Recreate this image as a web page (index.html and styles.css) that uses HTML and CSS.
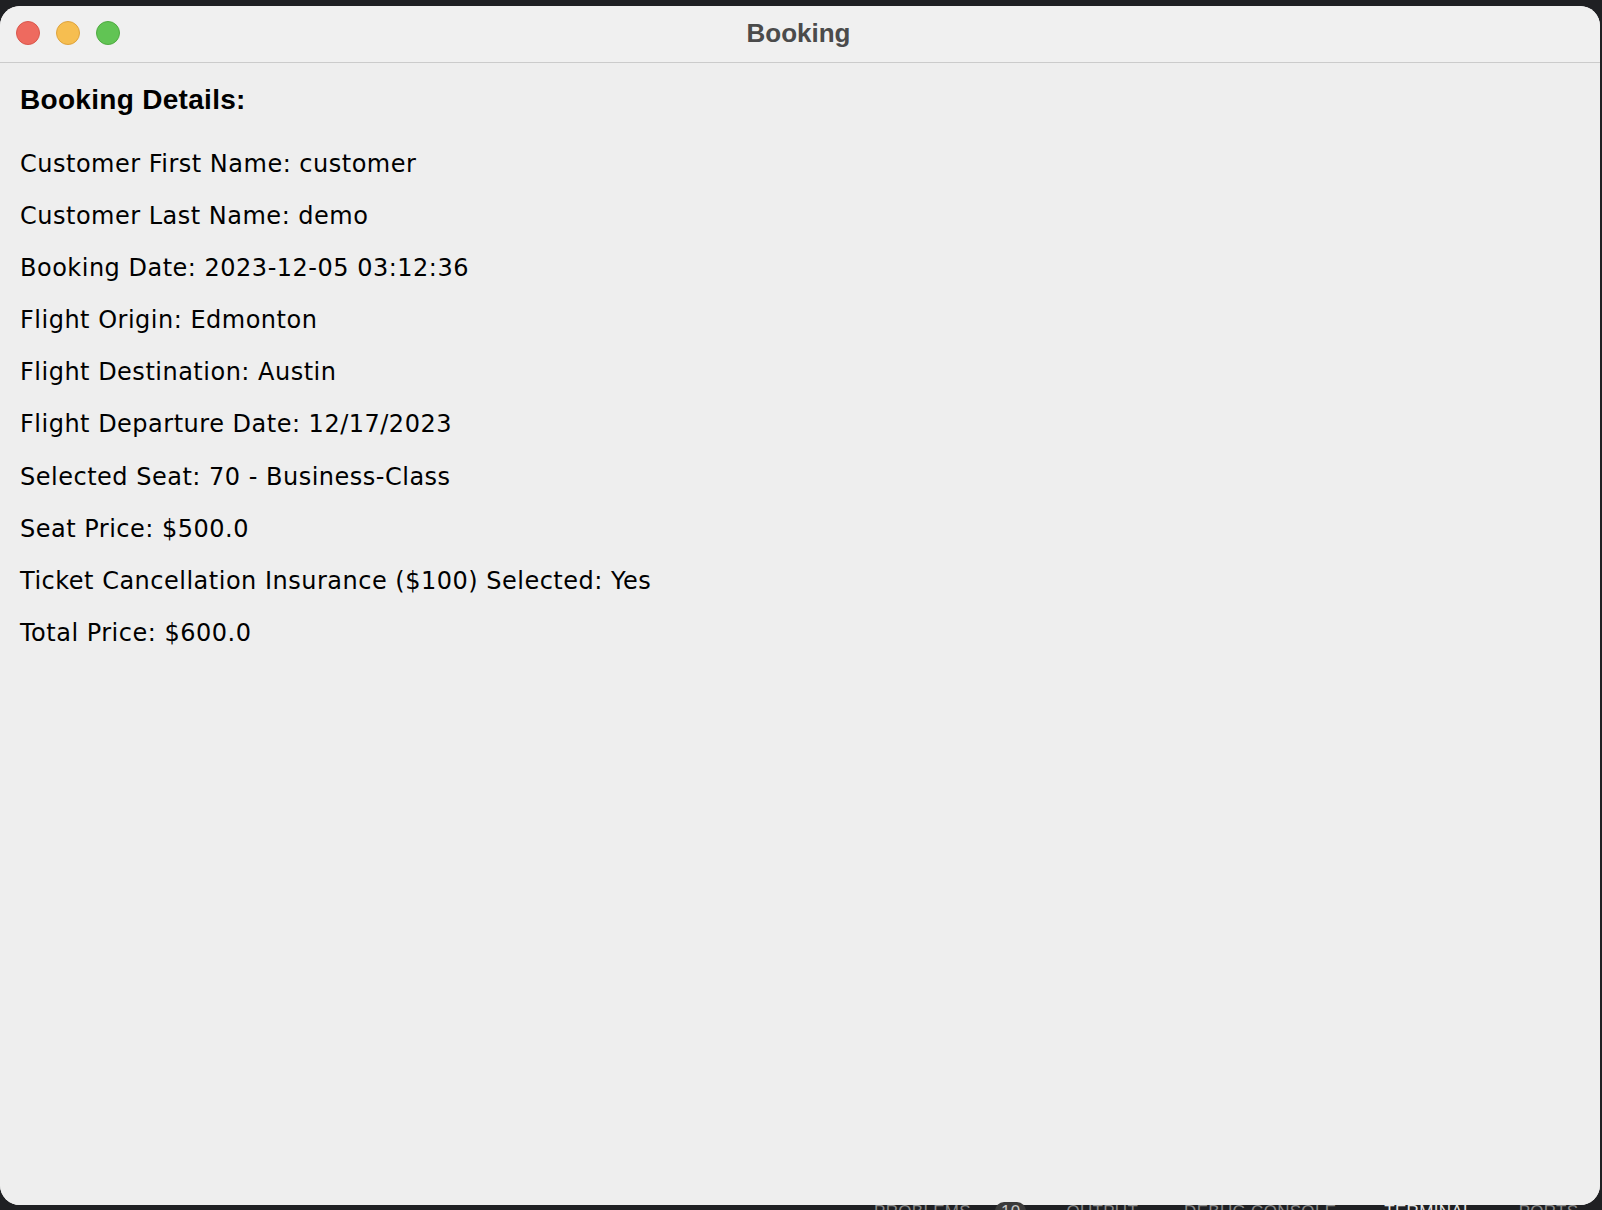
FILE: index.html
```html
<!DOCTYPE html>
<html lang="en">
<head>
<meta charset="utf-8">
<title>Booking</title>
<link rel="stylesheet" href="styles.css">
</head>
<body>
<div class="desktop">
  <div class="window">
    <div class="titlebar">
      <div class="lights">
        <span class="light red"></span>
        <span class="light yellow"></span>
        <span class="light green"></span>
      </div>
      <div class="title">Booking</div>
    </div>
    <div class="content">
      <h1 class="heading">Booking Details:</h1>
      <div class="details">
        <div class="row">Customer First Name: customer</div>
        <div class="row">Customer Last Name: demo</div>
        <div class="row">Booking Date: 2023-12-05 03:12:36</div>
        <div class="row">Flight Origin: Edmonton</div>
        <div class="row">Flight Destination: Austin</div>
        <div class="row">Flight Departure Date: 12/17/2023</div>
        <div class="row">Selected Seat: 70 - Business-Class</div>
        <div class="row">Seat Price: $500.0</div>
        <div class="row">Ticket Cancellation Insurance ($100) Selected: Yes</div>
        <div class="row">Total Price: $600.0</div>
      </div>
    </div>
  </div>
  <div class="panel-tabs">
    <span class="tab tab-problems">PROBLEMS</span>
    <span class="badge">10</span>
    <span class="tab tab-output">OUTPUT</span>
    <span class="tab tab-debug">DEBUG CONSOLE</span>
    <span class="tab tab-terminal">TERMINAL</span>
    <span class="tab tab-ports">PORTS</span>
  </div>
</div>
</body>
</html>
```

FILE: styles.css
```css
html, body {
  margin: 0;
  padding: 0;
  width: 1602px;
  height: 1210px;
  overflow: hidden;
  background: #1f2023;
}

.desktop {
  width: 1602px;
  height: 1210px;
  padding-top: 6px;
  box-sizing: border-box;
  display: flex;
  flex-direction: column;
  overflow: hidden;
}

.window {
  width: 1600px;
  height: 1199px;
  flex: none;
  background: #eeeeee;
  border-radius: 20px;
  overflow: hidden;
  display: flex;
  flex-direction: column;
}

.titlebar {
  position: relative;
  height: 56px;
  flex: none;
  background: #f0f0f0;
  border-bottom: 1px solid #cbcbcb;
  display: flex;
  align-items: center;
  justify-content: center;
}

.lights {
  position: absolute;
  left: 16px;
  top: 15px;
  display: flex;
  gap: 16px;
}

.light {
  width: 22px;
  height: 22px;
  border-radius: 50%;
  display: block;
}

.red {
  background: #ee6a5f;
  border: 1px solid #d9574c;
}

.yellow {
  background: #f6be50;
  border: 1px solid #dea33d;
}

.green {
  background: #61c454;
  border: 1px solid #4faa41;
}

.title {
  font-family: "Liberation Sans", Arial, sans-serif;
  font-weight: bold;
  font-size: 26px;
  color: #4b4b4b;
  line-height: 30px;
  padding-bottom: 2px;
  padding-right: 3px;
}

.content {
  flex: 1;
  padding: 20px 20px 0 20px;
  background: #eeeeee;
}

.heading {
  margin: 0;
  font-family: "Liberation Sans", Arial, sans-serif;
  font-weight: bold;
  font-size: 28px;
  letter-spacing: 0.3px;
  line-height: 34px;
  color: #000000;
}

.details {
  margin-top: 21px;
  font-family: "DejaVu Sans", Verdana, sans-serif;
  font-size: 24px;
  letter-spacing: 0.5px;
  color: #000000;
}

.row {
  line-height: 52.1px;
  height: 52.1px;
  white-space: nowrap;
}

.panel-tabs {
  height: 8px;
  flex: none;
  display: flex;
  align-items: flex-start;
  font-family: "Liberation Sans", Arial, sans-serif;
  font-size: 17px;
  letter-spacing: 0.3px;
  line-height: 20px;
  color: #8a8a8a;
  margin-top: -3px;
}

.tab {
  display: block;
  white-space: nowrap;
}

.tab-problems { margin-left: 874px; }

.badge {
  margin-left: 24px;
  background: #3a3a3a;
  color: #c8c8c8;
  padding: 0 6px;
  border-radius: 9px;
}

.tab-output { margin-left: 40px; }
.tab-debug { margin-left: 46px; }
.tab-terminal { margin-left: 48px; color: #e6e6e6; }
.tab-ports { margin-left: 46px; }
```
